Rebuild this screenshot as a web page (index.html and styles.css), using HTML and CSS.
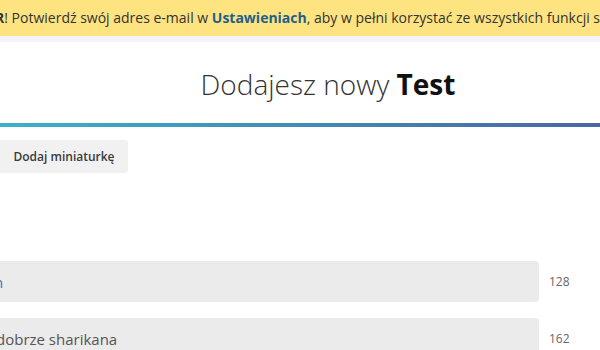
FILE: index.html
```html
<!DOCTYPE html>
<html lang="pl">
<head>
  <meta charset="UTF-8">
  <meta name="viewport" content="width=device-width, initial-scale=1.0">
  <title>Dodajesz nowy Test</title>
  <link rel="stylesheet" href="styles.css">
</head>
<body>
  <div class="notice">
    <p class="notice-text"><b>R</b>! Potwierdź swój adres e-mail w <a href="#">Ustawieniach</a>, aby w pełni korzystać ze wszystkich funkcji serwisu.</p>
  </div>
  <div class="notice-shadow"></div>

  <div class="header">
    <h1>Dodajesz nowy <strong>Test</strong></h1>
  </div>
  <div class="divider"></div>

  <div class="editor">
    <button class="thumb-btn">Dodaj miniaturkę</button>

    <div class="fields">
      <div class="field-row">
        <div class="field field-title"><span>n</span></div>
        <span class="counter">128</span>
      </div>
      <div class="field-row">
        <div class="field field-desc"><span>dobrze sharikana</span></div>
        <span class="counter">162</span>
      </div>
    </div>
  </div>
</body>
</html>
```

FILE: styles.css
```css
body {
  font-family: "Open Sans", Arial, sans-serif;
  margin: 0;
  padding: 0;
  background: #fff;
  overflow: hidden;
  color: #333;
}

.notice {
  background-color: #fee381;
  height: 36px;
  overflow: hidden;
}

.notice-text {
  margin: 0 0 0 -5px;
  font-size: 14px;
  line-height: 35px;
  white-space: nowrap;
  color: #333;
}

.notice-text a {
  color: #1e5f8c;
  font-weight: bold;
  text-decoration: none;
}

.notice-shadow {
  height: 6px;
  background: #f3f3f9;
}

.header {
  height: 81px;
  display: flex;
  align-items: center;
  justify-content: center;
  padding-left: 56px;
}

h1 {
  margin: 0;
  margin-top: 2px;
  font-size: 28px;
  font-weight: 300;
  color: #333;
}

h1 strong {
  font-weight: 700;
  color: #111;
}

.divider {
  height: 4px;
  background: linear-gradient(to right, #3ab1cc, #4a66a2);
}

.editor {
  padding-top: 13px;
}

.thumb-btn {
  font-family: inherit;
  font-size: 12px;
  font-weight: 600;
  color: #3a3a3a;
  background: #f1f1f1;
  border: none;
  border-radius: 0 3px 3px 0;
  height: 33px;
  width: 128px;
  padding: 0;
}

.fields {
  margin-top: 88px;
  display: flex;
  flex-direction: column;
  gap: 16px;
}

.field-row {
  display: flex;
  align-items: center;
  gap: 10px;
}

.field {
  width: 539px;
  height: 41px;
  background: #ebebeb;
  border-radius: 0 4px 4px 0;
  display: flex;
  align-items: center;
  font-size: 15px;
  color: #555;
  overflow: hidden;
  white-space: nowrap;
}

.field-title span {
  margin-left: -6px;
  color: #2b7cb8;
}

.field-desc span {
  margin-left: -4px;
}

.counter {
  font-size: 12px;
  color: #666;
}
```
